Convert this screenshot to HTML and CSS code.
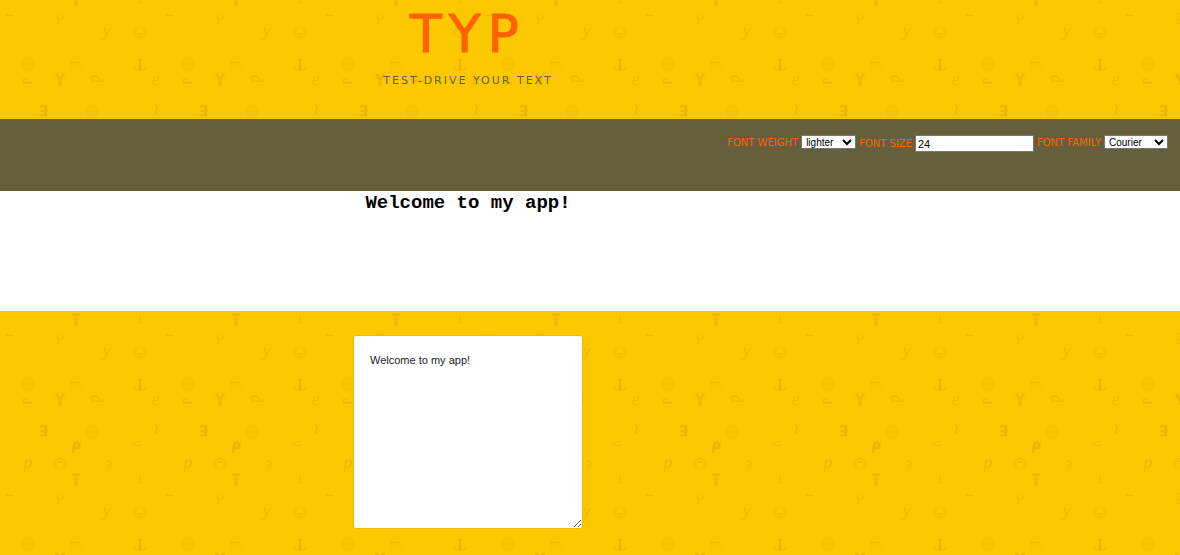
FILE: index.html
```html
<!DOCTYPE html>
<html lang="en">
<head>
<meta charset="utf-8">
<title>TYP</title>
<link rel="stylesheet" href="styles.css">
</head>
<body>
<svg class="backdrop" aria-hidden="true">
  <defs>
    <g id="face" fill="none" stroke="#f2b900" stroke-width="1">
      <circle r="5.4"/>
      <path d="M-2.500 -2.500v2M2.500 -2.500v2M-3 1.500q3 2.400 6 0"/>
    </g>
    <pattern id="letters" x="0" y="-7" width="160" height="160" patternUnits="userSpaceOnUse">
      <g class="glyphs" transform="translate(0 7)">
        <text class="heavy" x="76" y="5">T</text>
        <text class="thin" transform="translate(140 0) rotate(180)" y="4">t</text>
        <path d="M6 14.200h1.500l.5.500h6.500v1.600h-8.500z"/>
        <text class="book" x="60" y="24">P</text>
        <text class="slant" x="107" y="36">y</text>
        <use href="#face" x="140" y="32"/>
        <use href="#face" transform="translate(28 64) rotate(-90)"/>
        <text class="book" transform="translate(75 65) rotate(90)" y="5">E</text>
        <text class="roman" transform="translate(140 64) rotate(180)" y="5">T</text>
        <text class="book dark" transform="translate(28 81) rotate(-90)" y="4">P</text>
        <text class="heavy" x="60" y="85">Y</text>
        <text class="curly" transform="translate(95 79) rotate(80)" y="4">d</text>
        <text class="curly" x="156" y="85">e</text>
        <text class="heavy" transform="translate(44 110) rotate(180)" y="5">E</text>
        <use href="#face" transform="translate(92 112) rotate(90)"/>
        <text class="curly" transform="translate(156 109) rotate(180)" y="4">t</text>
        <text class="heavy oblique" x="76" y="133">P</text>
        <path class="hook" d="M141 121.500h-5q-2.500 .5-1.500 4.500h6.500M131.500 121.500q0 3 3 4"/>
        <text class="curly" x="28" y="148">p</text>
        <use href="#face" transform="translate(60 144) rotate(180)"/>
        <text class="thin" transform="translate(109 144) rotate(180)" y="3">e</text>
      </g>
    </pattern>
  </defs>
  <rect width="100%" height="100%" fill="url(#letters)"/>
</svg>
<header class="masthead">
  <div class="column">
    <h1 class="title">TYP</h1>
    <p class="tagline">TEST-DRIVE YOUR TEXT</p>
  </div>
</header>
<form class="toolbar">
  <label class="label" for="weight">FONT WEIGHT</label>
  <select class="control weight" id="weight"><option>lighter</option><option>normal</option><option>bold</option></select>
  <label class="label label-size" for="size">FONT SIZE</label>
  <input class="control size" id="size" type="text" value="24">
  <label class="label" for="family">FONT FAMILY</label>
  <select class="control family" id="family"><option>Courier</option><option>Helvetica</option><option>Verdana</option></select>
</form>
<section class="preview">
  <p class="column sample">Welcome to my app!</p>
</section>
<main class="editor">
  <textarea class="column field" aria-label="Your text">Welcome to my app!</textarea>
</main>
</body>
</html>
```

FILE: styles.css
```css
* {
  box-sizing: border-box;
}

body {
  position: relative;
  min-height: 100vh;
  margin: 0;
  background: #fcc800;
  font-family: "DejaVu Sans", Verdana, sans-serif;
}

.backdrop {
  position: absolute;
  inset: 0;
  z-index: -1;
  width: 100%;
  height: 100%;
}

.glyphs {
  fill: #f1b700;
  text-anchor: middle;
  text-rendering: geometricPrecision;
}

.heavy {
  font: 800 16px "Open Sans", sans-serif;
}

.oblique {
  font-style: italic;
}

.slant {
  font: italic 16px "Open Sans", sans-serif;
}

.thin {
  font: 15px "Liberation Serif", serif;
}

.book {
  font: 16px "Liberation Serif", serif;
  fill: #f4bd00;
}

.dark {
  font-size: 14px;
  fill: #f1b700;
}

.roman {
  font: bold 17px "Liberation Serif", serif;
}

.curly {
  font: italic 18px "Liberation Serif", serif;
}

.hook {
  fill: none;
  stroke: #f1b700;
  stroke-width: 1px;
}

.column {
  width: 230px;
  margin: 0 0 0 calc(30% - 1px);
  text-align: center;
  white-space: nowrap;
}

.masthead {
  min-height: 119px;
  padding-top: 4px;
}

.title {
  margin: 0;
  color: #ff6200;
  font-size: 52px;
  font-weight: normal;
  line-height: 60px;
  letter-spacing: 7px;
  -webkit-text-stroke: 1px #ff6200;
}

.tagline {
  margin: 7px 0 0;
  color: #675f3c;
  font-size: 11px;
  line-height: 20px;
  letter-spacing: 2px;
}

.toolbar {
  display: flex;
  justify-content: flex-end;
  align-items: flex-start;
  gap: 3px;
  min-height: 72px;
  padding: 16px 12px;
  background: #675f3c;
}

.label {
  color: #ff6200;
  font-size: 10px;
  line-height: 15px;
}

.label-size {
  line-height: 17px;
}

.control {
  border: 1px solid #767676;
  border-radius: 0;
  margin: 0;
  padding: 0;
  background-color: #fff;
  color: #000;
  font: 11px "Liberation Sans", Arial, sans-serif;
}

.weight,
.family {
  height: 14px;
  font-size: 10px;
}

.weight {
  width: 55px;
}

.family {
  width: 64px;
}

.size {
  width: 119px;
  height: 17px;
  padding: 0 2px;
}

.preview {
  min-height: 120px;
  background: #fff;
}

.sample {
  color: #000;
  font-family: "Liberation Mono", Courier, monospace;
  font-size: 19px;
  font-weight: bold;
  line-height: 24px;
}

.editor {
  padding: 24px 0;
}

.field {
  display: block;
  height: 194px;
  padding: 16px;
  border: 1px solid #f1b700;
  border-radius: 3px;
  background: #fff;
  color: #222;
  font: 11px/16px "Liberation Sans", Arial, sans-serif;
  text-align: left;
  white-space: pre-wrap;
}
```
